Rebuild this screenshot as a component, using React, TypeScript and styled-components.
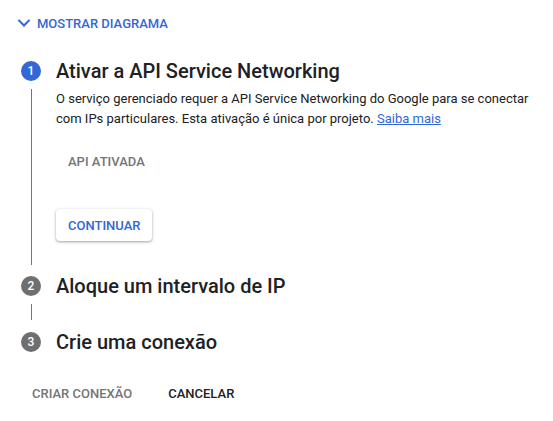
import React from "react";
import styled, { createGlobalStyle } from "styled-components";

const Global = createGlobalStyle`
  html, body { margin: 0; padding: 0; background: #fff; }
  body { font-family: Roboto, "Liberation Sans", Arial, sans-serif; color: #202124; -webkit-font-smoothing: antialiased; }
  * { box-sizing: border-box; }
`;

const Page = styled.div`
  padding: 5px 0 0 0;
  width: 553px;
  height: 421px;
`;

const Toggle = styled.button`
  display: flex;
  align-items: center;
  gap: 1px;
  height: 36px;
  margin-left: 12px;
  padding: 0;
  border: none;
  background: none;
  color: #3367d6;
  font-family: inherit;
  font-size: 13px;
  font-weight: 500;
  text-transform: uppercase;
  cursor: pointer;
`;

const Stepper = styled.div`
  margin-top: 18px;
  padding-left: 21px;
  display: flex;
  flex-direction: column;
`;

const StepHeader = styled.div`
  display: grid;
  grid-template-columns: 20px 1fr;
  column-gap: 15px;
  align-items: center;
  height: 20px;
`;

const Circle = styled.div<{ $active?: boolean }>`
  width: 20px;
  height: 20px;
  border-radius: 50%;
  background: ${(p) => (p.$active ? "#3367d6" : "#6f6f6f")};
  color: #fff;
  font-size: 12px;
  font-weight: 500;
  display: flex;
  align-items: center;
  justify-content: center;
`;

const StepTitle = styled.h2`
  margin: 0;
  font-size: 20px;
  font-weight: 500;
  line-height: 24px;
  color: #202124;
`;

const StepBody = styled.div<{ $bottom?: number }>`
  display: grid;
  grid-template-columns: 20px 1fr;
  column-gap: 15px;
  padding: 10px 0 ${(p) => p.$bottom ?? 10}px 0;
`;

const Connector = styled.div`
  justify-self: center;
  width: 1px;
  background: #757575;
`;

const BodyContent = styled.div<{ $pad?: number }>`
  display: flex;
  flex-direction: column;
  align-items: flex-start;
  padding-bottom: ${(p) => p.$pad ?? 0}px;
  min-height: 16px;
`;

const Description = styled.p`
  margin: 0;
  font-size: 13px;
  line-height: 20px;
  color: #202124;
`;

const Link = styled.a`
  color: #3367d6;
  text-decoration: underline;
`;

const FlatButton = styled.button<{ $tone?: "muted" | "dark" }>`
  height: 36px;
  padding: 0 12px;
  border: none;
  border-radius: 4px;
  background: none;
  font-family: inherit;
  font-size: 13px;
  font-weight: 500;
  text-transform: uppercase;
  color: ${(p) => (p.$tone === "dark" ? "#202124" : "#757575")};
`;

const Status = styled(FlatButton)`
  margin-top: 14px;
`;

const RaisedButton = styled.button`
  margin-top: 30px;
  height: 32px;
  padding: 0 12px;
  border: none;
  border-radius: 4px;
  background: #fff;
  color: #3367d6;
  font-family: inherit;
  font-size: 13px;
  font-weight: 500;
  text-transform: uppercase;
  box-shadow: 0 1px 2px rgba(60, 64, 67, 0.3), 0 1px 3px 1px rgba(60, 64, 67, 0.15);
`;

const Actions = styled.div`
  display: flex;
  gap: 12px;
  margin-top: 25px;
  padding-left: 20px;
`;

const Chevron = () => (
  <svg width="24" height="24" viewBox="0 0 24 24" fill="#3367d6" aria-hidden>
    <path d="M16.9 8.2L12 13.1 7.1 8.2 5.7 9.6l6.3 6.3 6.3-6.3z" />
  </svg>
);

export default function App() {
  return (
    <Page>
      <Global />
      <Toggle>
        <Chevron />
        Mostrar diagrama
      </Toggle>
      <Stepper>
        <StepHeader>
          <Circle $active>1</Circle>
          <StepTitle>Ativar a API Service Networking</StepTitle>
        </StepHeader>
        <StepBody $bottom={9}>
          <Connector />
          <BodyContent $pad={24}>
            <Description>
              O serviço gerenciado requer a API Service Networking do Google para se conectar com IPs
              particulares. Esta ativação é única por projeto. <Link href="#">Saiba mais</Link>
            </Description>
            <Status $tone="muted">API ativada</Status>
            <RaisedButton>Continuar</RaisedButton>
          </BodyContent>
        </StepBody>
        <StepHeader>
          <Circle>2</Circle>
          <StepTitle>Aloque um intervalo de IP</StepTitle>
        </StepHeader>
        <StepBody>
          <Connector />
          <BodyContent />
        </StepBody>
        <StepHeader>
          <Circle>3</Circle>
          <StepTitle>Crie uma conexão</StepTitle>
        </StepHeader>
      </Stepper>
      <Actions>
        <FlatButton $tone="muted">Criar conexão</FlatButton>
        <FlatButton $tone="dark">Cancelar</FlatButton>
      </Actions>
    </Page>
  );
}
